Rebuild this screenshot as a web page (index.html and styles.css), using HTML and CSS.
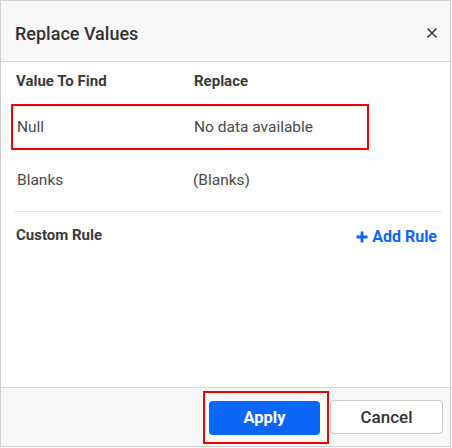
FILE: index.html
```html
<!DOCTYPE html>
<html>
<head>
<meta charset="utf-8">
<link rel="stylesheet" href="styles.css">
</head>
<body>
<div class="dialog">
  <div class="header">
    <div class="title">Replace Values</div>
    <svg class="close" width="12" height="12" viewBox="0 0 12 12"><path d="M1.5 1.5 L10.5 10.5 M10.5 1.5 L1.5 10.5" stroke="#3d3d3d" stroke-width="1.6" fill="none"/></svg>
  </div>
  <div class="content">
    <div class="row head"><div class="c1">Value To Find</div><div class="c2">Replace</div></div>
    <div class="row hl"><div class="c1">Null</div><div class="c2">No data available</div></div>
    <div class="row blanks"><div class="c1">Blanks</div><div class="c2">(Blanks)</div></div>
    <div class="sep"></div>
    <div class="row custom">
      <div class="clabel">Custom Rule</div>
      <div class="add"><svg width="12" height="12" viewBox="0 0 12 12"><path d="M6 0.5 V11.5 M0.5 6 H11.5" stroke="#0b66f7" stroke-width="2.8" fill="none"/></svg><span>Add Rule</span></div>
    </div>
  </div>
  <div class="footer">
    <div class="applywrap"><button class="btn apply">Apply</button></div>
    <button class="btn cancel">Cancel</button>
  </div>
</div>
</body>
</html>
```
FILE: styles.css
```css
* { box-sizing: border-box; }
html, body { margin: 0; padding: 0; background: #fff; }
body { font-family: Roboto, "Liberation Sans", sans-serif; }
.dialog {
  width: 451px; height: 447px;
  border: 1px solid #cfcfcf;
  display: flex; flex-direction: column;
  background: #fff;
}
.header {
  height: 61px; flex: none;
  background: #f8f8f8;
  border-bottom: 1px solid #d6d6d6;
  display: flex; align-items: center; justify-content: space-between;
  padding: 0 12px 0 14px;
}
.title { font-size: 18px; font-weight: 500; color: #333; padding-top: 4px; }
.close { margin-top: 4px; }
.content { flex: 1; padding: 0 9px 0 14px; }
.row { display: flex; align-items: center; font-size: 15.5px; color: #4a4a4a; }
.row.head { height: 38px; padding-left: 1px; font-weight: 700; font-size: 15px; color: #3a3a3a; }
.row.head .c1 { width: 178px; }
.row.hl {
  margin-top: 4px; margin-left: -4px; width: 358px; height: 46px;
  border: 2px solid #f20000; padding-left: 4px;
}
.row.hl .c1 { width: 177px; }
.row.blanks { margin-top: 7px; height: 46px; padding-left: 2px; }
.row.blanks .c1 { width: 176px; }
.sep { margin-top: 8px; height: 1px; background: #e2e2e2; }
.row.custom { height: 46px; justify-content: space-between; padding-left: 1px; }
.clabel { font-size: 15px; font-weight: 700; color: #3a3a3a; }
.add { display: flex; align-items: center; color: #0b66f7; font-size: 16px; font-weight: 700; gap: 4px; padding-top: 3px; margin-right: 4px; }
.footer {
  height: 59px; flex: none;
  background: #f8f8f8;
  border-top: 1px solid #d6d6d6;
  display: flex; align-items: center; justify-content: flex-end;
  padding-right: 7px;
}
.applywrap { border: 2px solid #f20000; padding: 8px 7px 7px 4px; margin-right: 1px; }
.btn {
  font-family: Roboto, "Liberation Sans", sans-serif;
  height: 34px; border-radius: 4px; cursor: pointer; display: block;
}
.apply { width: 111px; background: #0b66f7; color: #fff; border: none; font-weight: 700; font-size: 16.5px; }
.cancel { width: 113px; background: #fff; color: #333; border: 1px solid #c8c8c8; font-weight: 500; font-size: 17px; }
```
